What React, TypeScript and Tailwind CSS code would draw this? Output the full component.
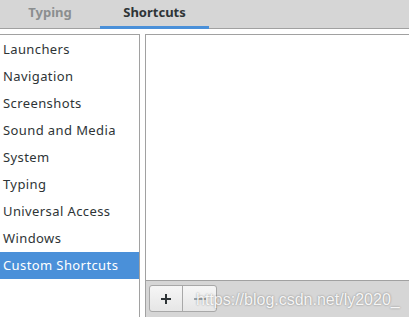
import React from 'react';

const categories = [
  'Launchers',
  'Navigation',
  'Screenshots',
  'Sound and Media',
  'System',
  'Typing',
  'Universal Access',
  'Windows',
  'Custom Shortcuts',
];

const App: React.FC = () => {
  const selected = 'Custom Shortcuts';

  return (
    <div
      className="w-[409px] h-[317px] overflow-hidden bg-white flex flex-col text-[13px] text-[#2e3436]"
      style={{ fontFamily: '"Noto Sans", "DejaVu Sans", sans-serif' }}
    >
      {/* tabs */}
      <div className="h-[29px] shrink-0 bg-[#d6d6d6] border-b border-[#a1a1a1] flex">
        <div className="w-[100px] flex items-center justify-center font-bold text-[#8b8e8f] pb-[3px]">Typing</div>
        <div className="w-[109px] relative flex items-center justify-center font-bold text-[#2e3436] pb-[3px]">
          Shortcuts
          <div className="absolute left-0 right-0 bottom-[-1px] h-[3px] bg-[#4a90d9]" />
        </div>
      </div>

      <div className="flex flex-1 mt-[5px] min-h-0">
        {/* category list */}
        <div className="w-[140px] shrink-0 border-t border-r border-[#a1a1a1] pt-[1px]">
          {categories.map(c => (
            <div
              key={c}
              className={
                c === selected
                  ? 'h-[27px] flex items-center pl-[3px] tracking-[0.4px] bg-[#4a90d9] text-white'
                  : 'h-[27px] flex items-center pl-[3px] tracking-[0.4px]'
              }
            >
              {c}
            </div>
          ))}
        </div>

        {/* shortcuts panel */}
        <div className="ml-[5px] flex-1 flex flex-col border-t border-l border-[#a1a1a1] relative">
          <div className="h-[246px] bg-white border-b border-[#a1a1a1]" />
          <div className="flex-1 bg-[#d6d6d6] pl-[3px] pt-[4px]">
            <div className="flex w-[68px] h-[27px] rounded-[3px] border border-[#a8a8a8] bg-gradient-to-b from-[#f6f6f6] to-[#e6e6e6]">
              <div className="w-[33px] border-r border-[#a8a8a8] flex items-center justify-center">
                <svg width="12" height="12" viewBox="0 0 12 12">
                  <path d="M6 1v10M1 6h10" stroke="#2e3436" strokeWidth="2" />
                </svg>
              </div>
              <div className="flex-1 flex items-center justify-center">
                <svg width="14" height="12" viewBox="0 0 14 12">
                  <path d="M1 6h12" stroke="#a0a3a4" strokeWidth="2" />
                </svg>
              </div>
            </div>
          </div>
          <div
            className="absolute left-[50px] top-[256px] text-[16px] leading-[18px] text-white/90 whitespace-nowrap"
            style={{ fontFamily: '"Liberation Sans", Arial, sans-serif', textShadow: '0 0 2px rgba(0,0,0,0.45)' }}
          >
            https://blog.csdn.net/ly2020_
          </div>
        </div>
      </div>
    </div>
  );
};

export default App;
